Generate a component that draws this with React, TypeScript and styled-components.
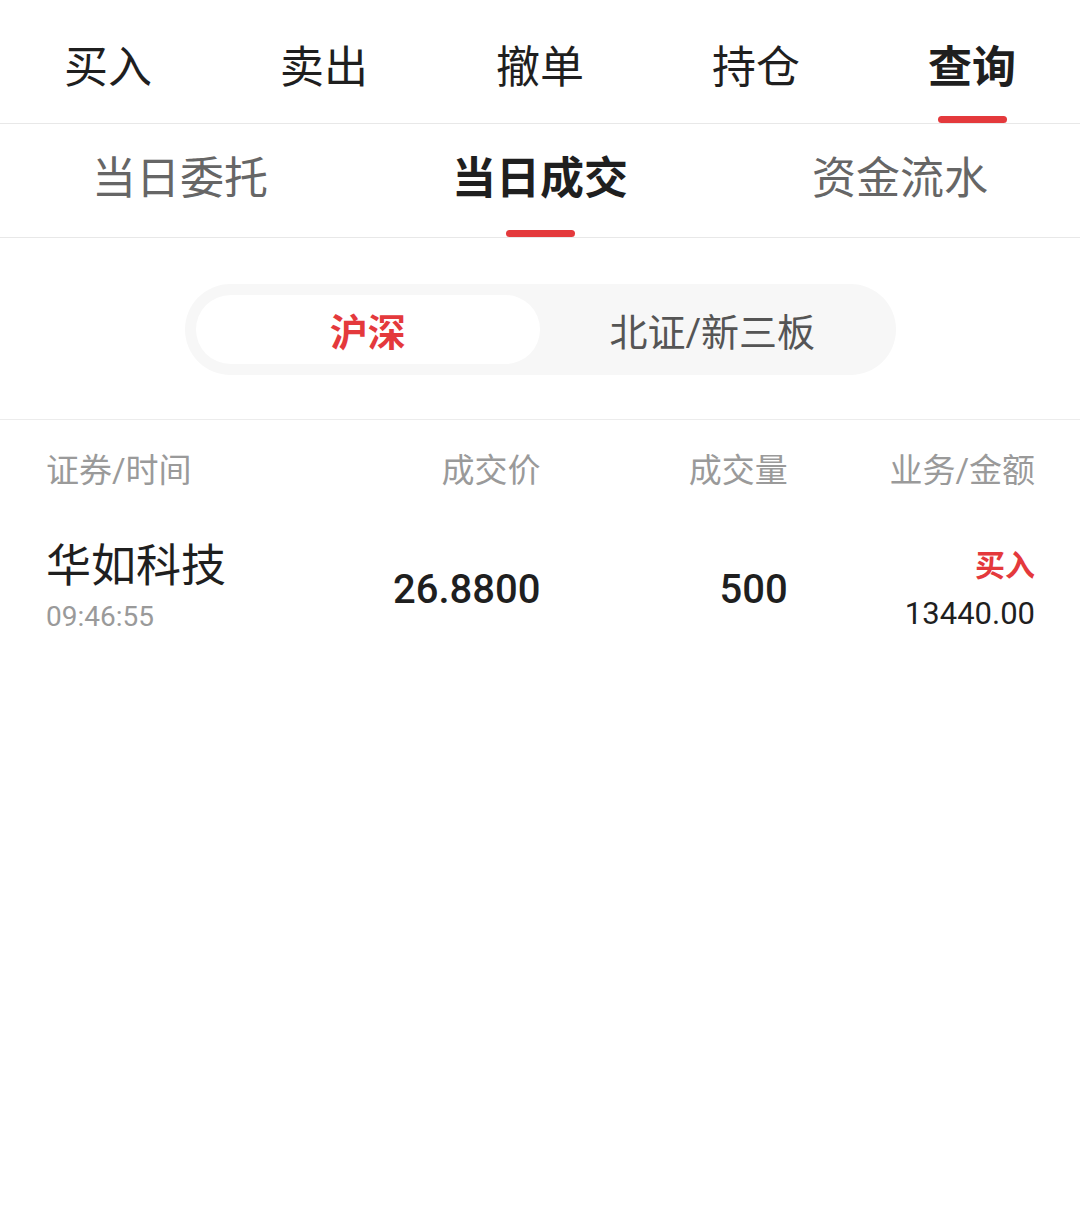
import styled, { createGlobalStyle } from 'styled-components'

const GlobalStyle = createGlobalStyle`
  * {
    box-sizing: border-box;
  }
  body {
    margin: 0;
    background: #fff;
    font-family: Roboto, 'Noto Sans CJK SC', sans-serif;
    color: #1f1f1f;
  }
`

const Page = styled.div`
  width: 1080px;
  min-height: 1220px;
  background: #fff;
`

const MainTabs = styled.nav`
  display: grid;
  grid-template-columns: repeat(5, 1fr);
  border-bottom: 1px solid #e8e8e8;
`

const SubTabs = styled.nav`
  display: grid;
  grid-template-columns: repeat(3, 1fr);
  border-bottom: 1px solid #e8e8e8;
`

const Tab = styled.div<{ $active?: boolean; $top: number; $gap: number; $color: string }>`
  display: flex;
  flex-direction: column;
  align-items: center;
  padding-top: ${(p) => p.$top}px;
  font-size: 44px;
  line-height: 52px;
  font-weight: ${(p) => (p.$active ? 700 : 400)};
  color: ${(p) => (p.$active ? '#1f1f1f' : p.$color)};
  cursor: pointer;

  &::after {
    content: '';
    display: block;
    width: 69px;
    height: 7px;
    margin-top: ${(p) => p.$gap}px;
    border-radius: 4px;
    background: ${(p) => (p.$active ? '#e4393c' : 'transparent')};
  }
`

const SegmentArea = styled.div`
  display: flex;
  justify-content: center;
  padding: 46px 0 44px;
  border-bottom: 1px solid #ececec;
`

const Segment = styled.div`
  display: grid;
  grid-template-columns: 1fr 1fr;
  width: 711px;
  padding: 11px;
  border-radius: 46px;
  background: #f7f7f7;
`

const SegmentItem = styled.div<{ $active?: boolean }>`
  height: 69px;
  display: flex;
  align-items: center;
  justify-content: center;
  border-radius: 35px;
  font-size: 38px;
  font-weight: ${(p) => (p.$active ? 700 : 400)};
  color: ${(p) => (p.$active ? '#e4393c' : '#555')};
  background: ${(p) => (p.$active ? '#fff' : 'transparent')};
`

const Row = styled.div`
  display: grid;
  grid-template-columns: repeat(4, 1fr);
  padding: 0 45px 0 46px;
`

const HeadRow = styled(Row)`
  padding-top: 31px;
  font-size: 33px;
  line-height: 40px;
  color: #9a9a9a;
`

const DataRow = styled(Row)`
  padding-top: 50px;
  align-items: center;
`

const Cell = styled.div<{ $left?: boolean }>`
  text-align: ${(p) => (p.$left ? 'left' : 'right')};
`

const Stack = styled.div<{ $left?: boolean }>`
  display: flex;
  flex-direction: column;
  align-items: ${(p) => (p.$left ? 'flex-start' : 'flex-end')};
`

const Name = styled.div`
  font-size: 45px;
  line-height: 50px;
  color: #1f1f1f;
`

const Time = styled.div`
  margin-top: 5px;
  font-size: 28px;
  line-height: 40px;
  color: #9a9a9a;
`

const Num = styled.div`
  font-size: 40px;
  font-weight: 500;
  color: #1f1f1f;
`

const Side = styled.div`
  font-size: 30px;
  line-height: 50px;
  font-weight: 700;
  color: #e4393c;
`

const Amount = styled.div`
  font-size: 31px;
  line-height: 46px;
  color: #1f1f1f;
`

const mainTabs = ['买入', '卖出', '撤单', '持仓', '查询']
const subTabs = ['当日委托', '当日成交', '资金流水']

const trades = [
  {
    name: '华如科技',
    time: '09:46:55',
    price: '26.8800',
    volume: '500',
    side: '买入',
    amount: '13440.00',
  },
]

const App = () => {
  return (
    <Page>
      <GlobalStyle />
      <MainTabs>
        {mainTabs.map((t) => (
          <Tab key={t} $active={t === '查询'} $top={42} $gap={22} $color="#1f1f1f">
            {t}
          </Tab>
        ))}
      </MainTabs>
      <SubTabs>
        {subTabs.map((t) => (
          <Tab key={t} $active={t === '当日成交'} $top={29} $gap={25} $color="#666">
            {t}
          </Tab>
        ))}
      </SubTabs>

      <SegmentArea>
        <Segment>
          <SegmentItem $active>沪深</SegmentItem>
          <SegmentItem>北证/新三板</SegmentItem>
        </Segment>
      </SegmentArea>

      <HeadRow>
        <Cell $left>证券/时间</Cell>
        <Cell>成交价</Cell>
        <Cell>成交量</Cell>
        <Cell>业务/金额</Cell>
      </HeadRow>

      {trades.map((t) => (
        <DataRow key={t.name + t.time}>
          <Stack $left>
            <Name>{t.name}</Name>
            <Time>{t.time}</Time>
          </Stack>
          <Cell>
            <Num>{t.price}</Num>
          </Cell>
          <Cell>
            <Num>{t.volume}</Num>
          </Cell>
          <Stack>
            <Side>{t.side}</Side>
            <Amount>{t.amount}</Amount>
          </Stack>
        </DataRow>
      ))}
    </Page>
  )
}

export default App
